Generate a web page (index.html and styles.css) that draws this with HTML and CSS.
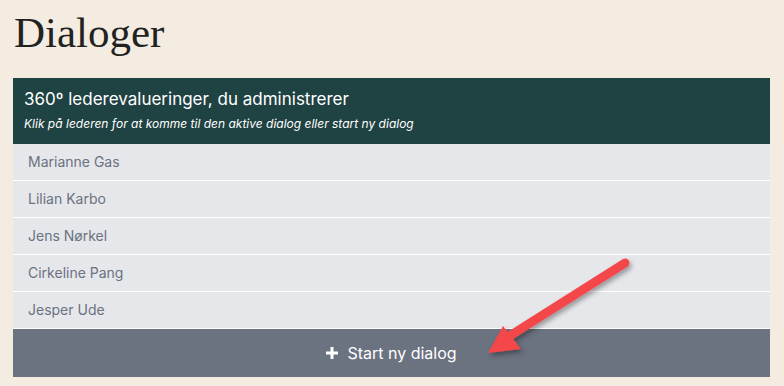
FILE: index.html
```html
<!DOCTYPE html>
<html lang="da">
<head>
    <meta charset="UTF-8">
    <title>Dialoger</title>
    <link rel="stylesheet" href="styles.css">
</head>
<body>
    <div class="page">
        <h1 class="page-title">Dialoger</h1>

        <div class="panel">
            <div class="panel-header">
                <div class="panel-title">360º lederevalueringer, du administrerer</div>
                <div class="panel-subtitle">Klik på lederen for at komme til den aktive dialog eller start ny dialog</div>
            </div>

            <ul class="leader-list">
                <li>Marianne Gas</li>
                <li>Lilian Karbo</li>
                <li>Jens Nørkel</li>
                <li>Cirkeline Pang</li>
                <li>Jesper Ude</li>
            </ul>

            <button class="start-button">
                <svg class="plus" width="12" height="12" viewBox="0 0 12 12">
                    <path d="M4.5 0h3v4.5H12v3H7.5V12h-3V7.5H0v-3h4.5z" fill="#fff"/>
                </svg>
                Start ny dialog
            </button>

            <!-- pil lagt ovenpå -->
            <svg class="arrow" width="784" height="386" viewBox="0 0 784 386">
                <defs>
                    <filter id="shadow" x="-20%" y="-20%" width="140%" height="140%">
                        <feDropShadow dx="2" dy="3" stdDeviation="2.5" flood-color="#000" flood-opacity="0.35"/>
                    </filter>
                </defs>
                <g filter="url(#shadow)">
                    <line x1="625" y1="263" x2="508" y2="337" stroke="#f4474a" stroke-width="9" stroke-linecap="round"/>
                    <polygon points="488,353 503,326 521,349" fill="#f4474a"/>
                </g>
            </svg>
        </div>
    </div>
</body>
</html>
```
FILE: styles.css
```css
body {
    margin: 0;
    background-color: #f4ece1;
    font-family: Inter, "Noto Sans", sans-serif;
}

.page {
    padding: 0 14px 0 13px;
}

.page-title {
    margin: 0;
    padding: 8px 0 0 1px;
    height: 70px;
    box-sizing: border-box;
    font-family: "Liberation Serif", serif;
    font-weight: normal;
    font-size: 43px;
    line-height: 50px;
    color: #222;
}

.panel {
    width: 757px;
    margin-top: 8px;
}

.panel-header {
    background-color: #1f4242;
    color: #fff;
    height: 66px;
    box-sizing: border-box;
    padding: 9px 11px 0;
}

.panel-title {
    font-size: 17px;
    line-height: 24px;
}

.panel-subtitle {
    font-size: 12px;
    font-style: italic;
    margin-top: 5px;
    line-height: 16px;
}

.leader-list {
    list-style: none;
    margin: 0;
    padding: 0;
}

.leader-list li {
    height: 36px;
    line-height: 36px;
    padding-left: 15px;
    background-color: #e5e7eb;
    border-bottom: 1px solid #fff;
    color: #6b7280;
    font-size: 14px;
}

.start-button {
    display: flex;
    align-items: center;
    justify-content: center;
    gap: 9px;
    width: 100%;
    height: 48px;
    border: none;
    background-color: #6b7280;
    color: #fff;
    font-family: Inter, "Noto Sans", sans-serif;
    font-size: 16px;
    cursor: pointer;
}

.arrow {
    position: absolute;
    left: 0;
    top: 0;
    pointer-events: none;
}
```
